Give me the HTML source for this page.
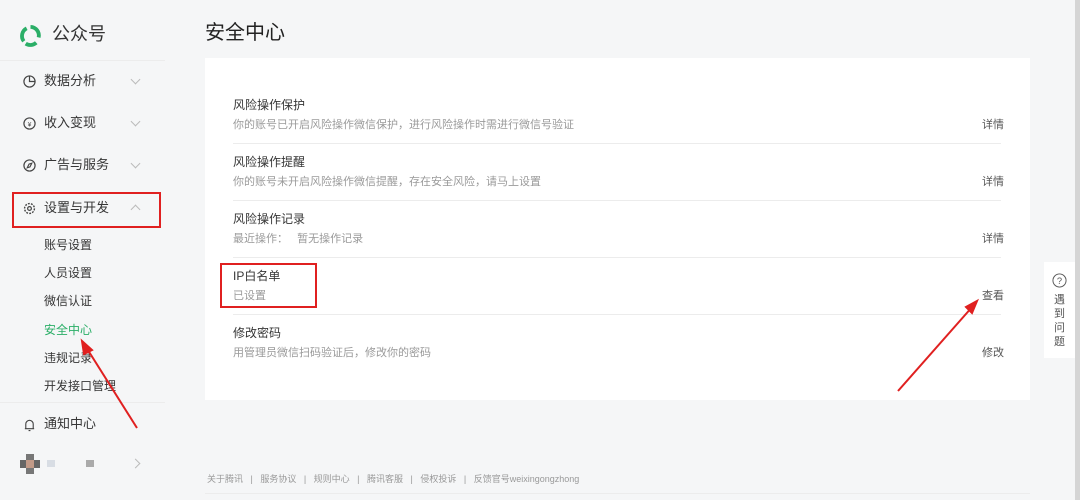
<!DOCTYPE html>
<html><head><meta charset="utf-8"><style>
*{margin:0;padding:0;box-sizing:border-box}
body{width:1080px;height:500px;background:#f5f6f7;font-family:"Liberation Sans","Noto Sans CJK SC",sans-serif;position:relative;overflow:hidden;color:#333;line-height:1.1}
.abs{position:absolute}
.nav{font-size:13px;color:#353535}
.sub{font-size:12px;color:#353535}
.chev{position:absolute;left:132px;width:7px;height:7px;border-right:1px solid #bbb;border-bottom:1px solid #bbb;transform:rotate(45deg)}
.t{font-size:12px;color:#353535;left:233px}
.d{font-size:11px;color:#9a9a9a;left:233px}
.l{font-size:11px;left:982px;color:#555}
.hr{left:233px;width:768px;height:1px;background:#ececec}
.red{border:2px solid #e02020}
</style></head><body>
<div class="abs" style="left:0;top:60px;width:165px;height:1px;background:#ececec"></div>
<svg class="abs" style="left:19px;top:24px" width="23" height="23" viewBox="0 0 24 24"><g fill="none" stroke="#2aae67" stroke-width="4"><path d="M5 18A9 9 0 0 1 8 4.5"/><path d="M12 3a9 9 0 0 1 8.5 11"/><path d="M18 19.5A9 9 0 0 1 7 20.5"/></g></svg>
<div class="abs" style="left:52px;top:25px;font-size:18px;color:#333">公众号</div>

<svg class="abs" style="left:23px;top:75px" width="13" height="13" viewBox="0 0 14 14"><circle cx="7" cy="7" r="6" fill="none" stroke="#444" stroke-width="1.3"/><path d="M7 1v6h6" fill="none" stroke="#444" stroke-width="1.3"/></svg>
<div class="abs nav" style="left:44px;top:74px">数据分析</div><div class="chev" style="top:76px"></div>
<svg class="abs" style="left:23px;top:117px" width="13" height="13" viewBox="0 0 14 14"><circle cx="7" cy="7" r="6" fill="none" stroke="#444" stroke-width="1.3"/><text x="7" y="10" font-size="7" text-anchor="middle" fill="#444">¥</text></svg>
<div class="abs nav" style="left:44px;top:116px">收入变现</div><div class="chev" style="top:118px"></div>
<svg class="abs" style="left:23px;top:159px" width="13" height="13" viewBox="0 0 14 14"><circle cx="7" cy="7" r="6" fill="none" stroke="#444" stroke-width="1.3"/><path d="M4.5 9.5l2-4 3-1-2 4z" fill="none" stroke="#444" stroke-width="1.2"/></svg>
<div class="abs nav" style="left:44px;top:158px">广告与服务</div><div class="chev" style="top:160px"></div>
<div class="abs red" style="left:12px;top:192px;width:149px;height:36px"></div>
<svg class="abs" style="left:23px;top:202px" width="13" height="13" viewBox="0 0 14 14"><circle cx="7" cy="7" r="2" fill="none" stroke="#444" stroke-width="1.3"/><circle cx="7" cy="7" r="5.3" fill="none" stroke="#444" stroke-width="1.5" stroke-dasharray="2 1.3"/></svg>
<div class="abs nav" style="left:44px;top:201px">设置与开发</div><div class="chev" style="top:206px;transform:rotate(225deg)"></div>
<div class="abs sub" style="left:44px;top:239px">账号设置</div>
<div class="abs sub" style="left:44px;top:267px">人员设置</div>
<div class="abs sub" style="left:44px;top:295px">微信认证</div>
<div class="abs sub" style="left:44px;top:324px;color:#2aae67">安全中心</div>
<div class="abs sub" style="left:44px;top:352px">违规记录</div>
<div class="abs sub" style="left:44px;top:380px">开发接口管理</div>
<div class="abs" style="left:0;top:402px;width:165px;height:1px;background:#ececec"></div>
<svg class="abs" style="left:23px;top:418px" width="13" height="14" viewBox="0 0 14 14"><path d="M3 11V6a4 4 0 0 1 8 0v5zM2 11h10M6 13h2" fill="none" stroke="#444" stroke-width="1.2"/></svg>
<div class="abs nav" style="left:44px;top:417px">通知中心</div>
<div class="abs" style="left:20px;top:460px;width:20px;height:8px;background:#666"></div>
<div class="abs" style="left:26px;top:454px;width:8px;height:20px;background:#777"></div>
<div class="abs" style="left:26px;top:460px;width:8px;height:8px;background:#c29a88"></div>
<div class="abs" style="left:47px;top:460px;width:8px;height:7px;background:#d8dde4"></div>
<div class="abs" style="left:86px;top:460px;width:8px;height:7px;background:#aaa"></div>
<div class="chev" style="top:460px;transform:rotate(-45deg)"></div>

<div class="abs" style="left:205px;top:22px;font-size:20px;color:#222">安全中心</div>
<div class="abs" style="left:205px;top:58px;width:825px;height:342px;background:#fff"></div>
<div class="abs t" style="top:99px">风险操作保护</div>
<div class="abs d" style="top:119px">你的账号已开启风险操作微信保护，进行风险操作时需进行微信号验证</div>
<div class="abs l" style="top:119px">详情</div>
<div class="abs hr" style="top:143px"></div>
<div class="abs t" style="top:156px">风险操作提醒</div>
<div class="abs d" style="top:176px">你的账号未开启风险操作微信提醒，存在安全风险，请马上设置</div>
<div class="abs l" style="top:176px">详情</div>
<div class="abs hr" style="top:200px"></div>
<div class="abs t" style="top:213px">风险操作记录</div>
<div class="abs d" style="top:233px">最近操作：&nbsp;&nbsp;&nbsp;暂无操作记录</div>
<div class="abs l" style="top:233px">详情</div>
<div class="abs hr" style="top:257px"></div>
<div class="abs red" style="left:220px;top:263px;width:97px;height:45px"></div>
<div class="abs t" style="top:270px">IP白名单</div>
<div class="abs d" style="top:290px">已设置</div>
<div class="abs l" style="top:290px">查看</div>
<div class="abs hr" style="top:314px"></div>
<div class="abs t" style="top:327px">修改密码</div>
<div class="abs d" style="top:347px">用管理员微信扫码验证后，修改你的密码</div>
<div class="abs l" style="top:347px">修改</div>

<div class="abs" style="left:207px;top:475px;font-size:9px;color:#999;white-space:pre">关于腾讯   |   服务协议   |   规则中心   |   腾讯客服   |   侵权投诉   |   反馈官号weixingongzhong</div>
<div class="abs" style="left:205px;top:493px;width:825px;height:1px;background:#ececec"></div>

<div class="abs" style="left:1044px;top:262px;width:31px;height:96px;background:#fff"></div>
<div class="abs" style="left:1075px;top:0;width:5px;height:500px;background:#d5d5d5"></div>
<svg class="abs" style="left:1052px;top:273px" width="15" height="15" viewBox="0 0 16 16"><circle cx="8" cy="8" r="7" fill="none" stroke="#555" stroke-width="1"/><text x="8" y="11.5" font-size="10" text-anchor="middle" fill="#555">?</text></svg>
<div class="abs" style="left:1054px;top:293px;width:12px;font-size:11px;line-height:14px;color:#555">遇到问题</div>

<svg class="abs" style="left:0;top:0" width="1080" height="500"><g stroke="#e02020" stroke-width="2" fill="#e02020"><line x1="137" y1="428" x2="86" y2="347"/><polygon points="82,341 92,350 84,354"/><line x1="898" y1="391" x2="973" y2="306"/><polygon points="977,301 972,313 966,307"/></g></svg>
</body></html>
